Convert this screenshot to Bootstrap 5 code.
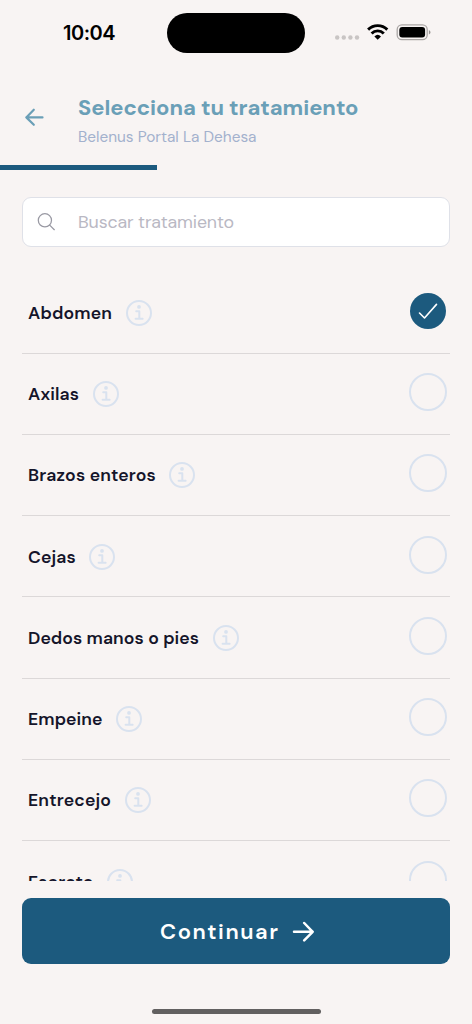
<!DOCTYPE html>
<html lang="es">
<head>
<meta charset="utf-8">
<meta name="viewport" content="width=device-width, initial-scale=1">
<title>Selecciona tu tratamiento</title>
<link href="https://cdn.jsdelivr.net/npm/bootstrap@5.3.0/dist/css/bootstrap.min.css" rel="stylesheet">
<style>
  :root { --brand: #1c5a7e; --teal: #6a9fb7; --outline: #d9e2ef; }
  body { background: #f8f4f3; font-family: "DM Sans", Inter, "Liberation Sans", sans-serif; color: #15152a; }
  .screen { height: 1024px; }
  svg { display: block; flex: none; }
  [data-width] { display: inline-block; white-space: nowrap; }
  .status { height: 65px; padding: 0 40.5px 0 63px; }
  .clock { width: 104px; font-family: Inter, "Liberation Sans", sans-serif; font-size: 20px; font-weight: 600; color: #000; }
  .island { width: 138px; height: 40px; background: #000; }
  .head { height: 100px; padding: 0 24px; }
  .back { width: 54px; color: var(--teal); }
  .title { font-size: 22px; font-weight: 700; line-height: 28px; color: var(--teal); padding-top: 1px; }
  .place { font-size: 15.4px; font-weight: 400; line-height: 20px; padding-top: 5px; color: #a3b1cd; }
  .step { height: 4.5px; background: transparent; }
  .step .progress-bar { background: var(--brand); }
  .search { height: 50.5px; margin: 27.2px 22px 0; border: 1.3px solid #dfe1e8; border-radius: 9px; padding-left: 14px; color: #9999a3; }
  .search input { font-size: 17.8px; letter-spacing: -.13px; color: #15152a; padding: 0; margin-left: 22px; }
  .search input::placeholder { color: #b9b8c3; opacity: 1; }
  .search input:focus { box-shadow: none; }
  .treatments { height: 608.4px; margin: 25.3px 22px 0; }
  .treatment { height: 81.25px; flex: none; border-bottom: 1.3px solid #dcd8d8; padding: 0 3px 3.4px 6px; }
  .item-name { font-size: 17.6px; font-weight: 650; line-height: 26px; margin-right: 13.6px; }
  .info { color: var(--outline); }
  .item-label { padding-top: 4px; }
  .tick { width: 38px; height: 38px; border: 2.3px solid var(--outline); }
  .tick.chosen { border-color: transparent; background: var(--brand); background-clip: padding-box; border-width: 1.2px; }
  .go { height: 66px; margin: 17.3px 22px 0; border-radius: 9px; background: var(--brand); color: #fff; gap: 14px; padding-left: 15px; }
  .go:hover { background: #174c6b; color: #fff; }
  .go span { font-size: 22px; font-weight: 640; }
  .home { width: 169px; height: 5.5px; margin: 44.5px 0 0 151.5px; background: #626060; }
</style>
</head>
<body>
<svg width="0" height="0" class="position-absolute" aria-hidden="true">
  <symbol id="info" viewBox="0 0 26 26">
    <circle cx="13" cy="13" r="12" fill="none" stroke="currentColor" stroke-width="2"/>
    <circle cx="13" cy="6.9" r="1.9" fill="currentColor"/>
    <path d="M10.2 11.2h3.1v7.5M9.6 18.8h7" fill="none" stroke="currentColor" stroke-width="2" stroke-linecap="round" stroke-linejoin="round"/>
  </symbol>
</svg>
<main class="screen d-flex flex-column overflow-hidden">
  <div class="status d-flex align-items-center">
    <div class="clock"><span data-width="52.5">10:04</span></div>
    <div class="island rounded-pill"></div>
    <svg class="ms-auto" width="98" height="20" viewBox="0 0 98 20">
      <g fill="#c9c5c4"><circle cx="3.2" cy="14.5" r="2.2"/><circle cx="9.8" cy="14.5" r="2.2"/><circle cx="16.4" cy="14.5" r="2.2"/><circle cx="23" cy="14.5" r="2.2"/></g>
      <g fill="none" stroke="#000" stroke-width="2.9"><path d="M34.1 6.6a13.6 13.6 0 0 1 19.2 0"/><path d="M37.6 10.4a8.6 8.6 0 0 1 12.2 0"/></g>
      <path d="M40.4 13.4a4.8 4.8 0 0 1 6.6 0l-3.3 3.4z"/>
      <rect x="63.2" y="1.9" width="30" height="14.8" rx="4.7" fill="none" stroke="#aaa6a5" stroke-width="1.3"/>
      <rect x="65.3" y="4" width="25.8" height="10.6" rx="3"/>
      <path d="M94.9 7.2c2.1.7 2.1 3.5 0 4.2z" fill="#999594"/>
    </svg>
  </div>
  <header class="head d-flex">
    <a class="back" href="#" aria-label="Volver">
      <svg width="21" height="20" viewBox="0 0 21 20" style="margin-top:42px" fill="none" stroke="currentColor" stroke-width="2.2" stroke-linecap="round" stroke-linejoin="round"><path d="M18.5 10.4H2.3M9.8 2.7 2.3 10.4l7.5 7.4"/></svg>
    </a>
    <div class="pt-4">
      <h1 class="title mb-0 mt-1"><span data-width="280.5">Selecciona tu tratamiento</span></h1>
      <p class="place mb-0"><span data-width="178.5">Belenus Portal La Dehesa</span></p>
    </div>
  </header>
  <div class="progress step rounded-0 flex-shrink-0"><div class="progress-bar" style="width:33.3%"></div></div>
  <label class="search d-flex align-items-center bg-white flex-shrink-0">
    <svg width="19" height="19" viewBox="0 0 19 19" fill="none" stroke="currentColor" stroke-width="1.25" stroke-linecap="round"><circle cx="7.9" cy="8.3" r="6.6"/><path d="m12.7 13.1 4.6 4.6"/></svg>
    <input class="form-control border-0 bg-transparent" type="text" placeholder="Buscar tratamiento">
  </label>
  <div class="treatments d-flex flex-column overflow-hidden flex-shrink-0">
    <div class="treatment d-flex align-items-center justify-content-between">
      <div class="item-label d-flex align-items-center"><span class="item-name" data-width="84">Abdomen</span><svg class="info" width="26" height="26"><use href="#info"/></svg></div>
      <span class="tick chosen rounded-circle d-flex align-items-center justify-content-center"><svg width="20" height="18" viewBox="0 0 20 18" fill="none" stroke="#fff" stroke-width="1.6" stroke-linecap="round" stroke-linejoin="round"><path d="m1.5 11 5 5L18.5 2.4"/></svg></span>
    </div>
    <div class="treatment d-flex align-items-center justify-content-between">
      <div class="item-label d-flex align-items-center"><span class="item-name" data-width="51">Axilas</span><svg class="info" width="26" height="26"><use href="#info"/></svg></div>
      <span class="tick rounded-circle"></span>
    </div>
    <div class="treatment d-flex align-items-center justify-content-between">
      <div class="item-label d-flex align-items-center"><span class="item-name" data-width="127.7">Brazos enteros</span><svg class="info" width="26" height="26"><use href="#info"/></svg></div>
      <span class="tick rounded-circle"></span>
    </div>
    <div class="treatment d-flex align-items-center justify-content-between">
      <div class="item-label d-flex align-items-center"><span class="item-name" data-width="47.8">Cejas</span><svg class="info" width="26" height="26"><use href="#info"/></svg></div>
      <span class="tick rounded-circle"></span>
    </div>
    <div class="treatment d-flex align-items-center justify-content-between">
      <div class="item-label d-flex align-items-center"><span class="item-name" data-width="171">Dedos manos o pies</span><svg class="info" width="26" height="26"><use href="#info"/></svg></div>
      <span class="tick rounded-circle"></span>
    </div>
    <div class="treatment d-flex align-items-center justify-content-between">
      <div class="item-label d-flex align-items-center"><span class="item-name" data-width="74.5">Empeine</span><svg class="info" width="26" height="26"><use href="#info"/></svg></div>
      <span class="tick rounded-circle"></span>
    </div>
    <div class="treatment d-flex align-items-center justify-content-between">
      <div class="item-label d-flex align-items-center"><span class="item-name" data-width="83">Entrecejo</span><svg class="info" width="26" height="26"><use href="#info"/></svg></div>
      <span class="tick rounded-circle"></span>
    </div>
    <div class="treatment d-flex align-items-center justify-content-between">
      <div class="item-label d-flex align-items-center"><span class="item-name" data-width="65.5">Escroto</span><svg class="info" width="26" height="26"><use href="#info"/></svg></div>
      <span class="tick rounded-circle"></span>
    </div>
  </div>
  <button type="button" class="go btn border-0 d-flex align-items-center justify-content-center flex-shrink-0">
    <span data-width="118">Continuar</span>
    <svg width="23" height="22" viewBox="0 0 23 22" fill="none" stroke="currentColor" stroke-width="2.5" stroke-linecap="round" stroke-linejoin="round"><path d="M2 11.8h18.7M12.2 3l8.5 8.8-8.5 8.6"/></svg>
  </button>
  <div class="home rounded-pill flex-shrink-0"></div>
</main>
<script src="https://cdn.jsdelivr.net/npm/bootstrap@5.3.0/dist/js/bootstrap.bundle.min.js"></script>
<script>
  // Track each label so that it fills its design width.
  document.querySelectorAll('[data-width]').forEach(function (el) {
    var want = parseFloat(el.dataset.width);
    var n = el.textContent.length - 1;
    var gap = (want - el.getBoundingClientRect().width) / n;
    el.style.letterSpacing = gap + 'px';
    el.style.width = want + 'px';
  });
</script>
</body>
</html>
